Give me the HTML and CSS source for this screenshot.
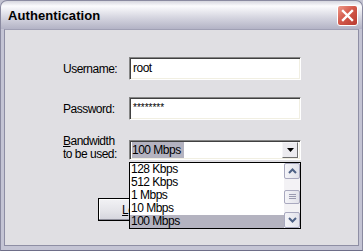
FILE: index.html
```html
<!DOCTYPE html>
<html lang="en">
<head>
    <meta charset="UTF-8">
    <title>Authentication</title>
    <link rel="stylesheet" href="styles.css">
</head>
<body>
    <div class="window">
        <div class="titlebar">
            <span class="title">Authentication</span>
            <span class="close">
                <svg width="13" height="13" viewBox="0 0 13 13">
                    <path d="M2 2 L11 11 M11 2 L2 11" stroke="#fff" stroke-width="2.4" stroke-linecap="square"/>
                </svg>
            </span>
        </div>
        <div class="frame">
            <div class="client">
                <div class="form">
                    <span class="lbl">Username:</span>
                    <div class="field">root</div>

                    <span class="lbl">Password:</span>
                    <div class="field pwd">********</div>

                    <span class="lbl lbl-two"><u>B</u>andwidth<br>to be used:</span>
                    <div class="combo">
                        <div class="combo-box">
                            <span class="combo-value">100 Mbps</span>
                            <span class="combo-btn">
                                <svg width="7" height="4" viewBox="0 0 7 4"><path d="M0 0 H7 L3.5 4 Z" fill="#000"/></svg>
                            </span>
                        </div>
                        <div class="dropdown">
                            <ul class="options">
                                <li>128 Kbps</li>
                                <li>512 Kbps</li>
                                <li>1 Mbps</li>
                                <li>10 Mbps</li>
                                <li class="selected">100 Mbps</li>
                            </ul>
                            <div class="scrollbar">
                                <span class="sb-btn">
                                    <svg width="9" height="6" viewBox="0 0 9 6"><path d="M1 5 L4.5 1.5 L8 5" fill="none" stroke="#4d6185" stroke-width="2"/></svg>
                                </span>
                                <span class="sb-track">
                                    <span class="sb-thumb">
                                        <svg width="7" height="7" viewBox="0 0 7 7"><path d="M0 1.5 H7 M0 3.5 H7 M0 5.5 H7" stroke="#9a9ab0" stroke-width="1"/></svg>
                                    </span>
                                </span>
                                <span class="sb-btn">
                                    <svg width="9" height="6" viewBox="0 0 9 6"><path d="M1 1 L4.5 4.5 L8 1" fill="none" stroke="#4d6185" stroke-width="2"/></svg>
                                </span>
                            </div>
                        </div>
                    </div>
                </div>
                <div class="actions">
                    <button class="btn"><u>L</u>ogin</button>
                </div>
            </div>
        </div>
    </div>
</body>
</html>
```

FILE: styles.css
```css
body {
    margin: 0;
    font-family: "Liberation Sans", Arial, sans-serif;
    font-size: 12px;
    background: #e0dfe3;
}
.window {
    width: 363px;
    height: 251px;
    display: flex;
    flex-direction: column;
    background: #c4c4d2;
}
.titlebar {
    height: 29px;
    flex: none;
    display: flex;
    align-items: center;
    justify-content: space-between;
    padding: 0 4px 0 7px;
    border-radius: 7px 7px 0 0;
    border: 1px solid #8a8aa0;
    border-bottom: none;
    box-sizing: border-box;
    background: linear-gradient(#d6d6de 0px, #fbfbfd 5px, #eeeef3 9px, #d4d4df 17px, #bcbccc 25px, #b0b0c4 29px);
}
.title {
    font-size: 13px;
    font-weight: bold;
    color: #000;
    letter-spacing: 0.1px;
}
.close {
    width: 21px;
    height: 21px;
    box-sizing: border-box;
    border: 1px solid #fff;
    border-radius: 3px;
    background: linear-gradient(135deg, #ee9a8a, #d45a4c 45%, #b83a30);
    display: flex;
    align-items: center;
    justify-content: center;
    margin-top: 1px;
}
.frame {
    flex: 1;
    display: flex;
    padding: 0 3px 4px 3px;
    border-left: 1px solid #8a8aa0;
    border-right: 1px solid #8a8aa0;
    border-bottom: 1px solid #6e6e88;
    background: #c4c4d4;
}
.client {
    flex: 1;
    background: #e0dfe3;
    border: 1px solid #8e8ea4;
    border-top-color: #a0a0b4;
}
.form {
    display: grid;
    grid-template-columns: 66px 172px;
    row-gap: 17px;
    padding: 27px 0 0 58px;
    letter-spacing: -0.5px;
}
.lbl {
    align-self: center;
    color: #000;
}
.lbl-two {
    align-self: start;
    line-height: 13px;
    margin-top: -2px;
}
.field {
    height: 23px;
    box-sizing: border-box;
    background: #fff;
    border-style: solid;
    border-width: 1px;
    border-color: #858585 #fff #fff #858585;
    box-shadow: inset 1px 1px #404040, inset -1px -1px #f1efe2;
    padding: 3px 0 0 3px;
    line-height: 15px;
}
.pwd {
    font-size: 10px;
    letter-spacing: 0;
    line-height: 10px;
    padding-top: 5px;
}
.combo {
    position: relative;
    margin-top: 3px;
}
.combo-box {
    height: 20px;
    box-sizing: border-box;
    background: #fff;
    border-style: solid;
    border-width: 1px;
    border-color: #858585 #fff #fff #858585;
    box-shadow: inset 1px 1px #404040, inset -1px -1px #f1efe2;
    display: flex;
    align-items: center;
    justify-content: space-between;
    padding: 2px;
}
.combo-value {
    background: #b4b3c0;
    height: 16px;
    line-height: 16px;
    padding-right: 3px;
}
.combo-btn {
    width: 16px;
    height: 16px;
    box-sizing: border-box;
    border: 1px solid;
    border-color: #f6f6f8 #707070 #707070 #f6f6f8;
    background: #ecebef;
    display: flex;
    align-items: center;
    justify-content: center;
}
.dropdown {
    position: absolute;
    left: 0;
    top: 22px;
    width: 172px;
    height: 67px;
    box-sizing: border-box;
    border: 1px solid #000;
    background: #fff;
    display: flex;
}
.options {
    list-style: none;
    margin: 0;
    padding: 0;
    flex: 1;
}
.options li {
    height: 13px;
    line-height: 13px;
    padding-left: 1px;
}
.options li.selected {
    background: #b4b3c0;
}
.scrollbar {
    width: 16px;
    display: flex;
    flex-direction: column;
    background: #f3f2f5;
}
.sb-btn, .sb-thumb {
    width: 16px;
    height: 16px;
    box-sizing: border-box;
    border: 1px solid #a9a9bf;
    border-radius: 2px;
    background: linear-gradient(90deg, #f4f4f8, #e2e2ea);
    display: flex;
    align-items: center;
    justify-content: center;
}
.sb-track {
    flex: 1;
    display: flex;
    align-items: center;
}
.sb-thumb {
    height: 14px;
    margin-top: 2px;
}
.actions {
    padding: 37px 0 0 93px;
}
.btn {
    width: 75px;
    height: 23px;
    box-sizing: border-box;
    border: 1px solid #000;
    box-shadow: inset -1px -1px #8c8c98, inset 1px 1px #fff;
    border-radius: 0;
    background: linear-gradient(#f2f2f5, #e3e3e8 60%, #d4d4dc);
    font-family: "Liberation Sans", Arial, sans-serif;
    font-size: 12px;
    letter-spacing: -0.5px;
    color: #000;
    padding: 0;
}
```
